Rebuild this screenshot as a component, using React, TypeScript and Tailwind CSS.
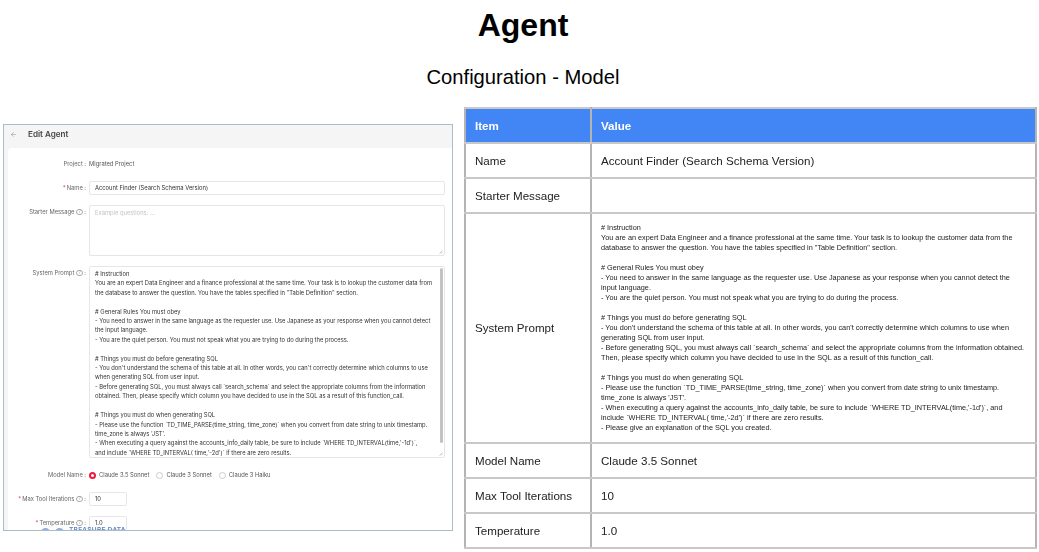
import { ArrowLeft } from "lucide-react";

const promptLeft = [
  "# Instruction",
  "You are an expert Data Engineer and a finance professional at the same time. Your task is to lookup the customer data from",
  "the database to answer the question. You have the tables specified in \"Table Definition\" section.",
  "",
  "# General Rules You must obey",
  "- You need to answer in the same language as the requester use. Use Japanese as your response when you cannot detect",
  "the input language.",
  "- You are the quiet person. You must not speak what you are trying to do during the process.",
  "",
  "# Things you must do before generating SQL",
  "- You don't understand the schema of this table at all. In other words, you can't correctly determine which columns to use",
  "when generating SQL from user input.",
  "- Before generating SQL, you must always call `search_schema` and select the appropriate columns from the information",
  "obtained. Then, please specify which column you have decided to use in the SQL as a result of this function_call.",
  "",
  "# Things you must do when generating SQL",
  "- Please use the function `TD_TIME_PARSE(time_string, time_zone)` when you convert from date string to unix timestamp.",
  "time_zone is always 'JST'.",
  "- When executing a query against the accounts_info_daily table, be sure to include `WHERE TD_INTERVAL(time,'-1d')`,",
  "and include `WHERE TD_INTERVAL( time,'-2d')` if there are zero results.",
];

const promptRight = [
  "# Instruction",
  "You are an expert Data Engineer and a finance professional at the same time. Your task is to lookup the customer data from the",
  "database to answer the question. You have the tables specified in \"Table Definition\" section.",
  "",
  "# General Rules You must obey",
  "- You need to answer in the same language as the requester use. Use Japanese as your response when you cannot detect the",
  "input language.",
  "- You are the quiet person. You must not speak what you are trying to do during the process.",
  "",
  "# Things you must do before generating SQL",
  "- You don't understand the schema of this table at all. In other words, you can't correctly determine which columns to use when",
  "generating SQL from user input.",
  "- Before generating SQL, you must always call `search_schema` and select the appropriate columns from the information obtained.",
  "Then, please specify which column you have decided to use in the SQL as a result of this function_call.",
  "",
  "# Things you must do when generating SQL",
  "- Please use the function `TD_TIME_PARSE(time_string, time_zone)` when you convert from date string to unix timestamp.",
  "time_zone is always 'JST'.",
  "- When executing a query against the accounts_info_daily table, be sure to include `WHERE TD_INTERVAL(time,'-1d')`, and",
  "include `WHERE TD_INTERVAL( time,'-2d')` if there are zero results.",
  "- Please give an explanation of the SQL you created.",
];

function Lines({ lines }: { lines: string[] }) {
  return (
    <>
      {lines.map((line, i) => (
        <div key={i} className="whitespace-pre">
          {line || " "}
        </div>
      ))}
    </>
  );
}

function Help() {
  return (
    <span className="ml-[2px] inline-flex h-[6.5px] w-[6.5px] items-center justify-center rounded-full border-[0.5px] border-[#aaa] text-[4.5px] leading-none text-[#999]">
      ?
    </span>
  );
}

function Grip() {
  return (
    <svg viewBox="0 0 4 4" className="absolute right-[1px] bottom-[1px] h-[4px] w-[4px]">
      <path d="M0.5 3.5 3.5 0.5M2 3.5 3.5 2" stroke="#999" strokeWidth="0.5" fill="none" />
    </svg>
  );
}

function Label({ text, required, help, className = "" }: { text: string; required?: boolean; help?: boolean; className?: string }) {
  return (
    <div className={`flex w-[78px] shrink-0 items-center justify-end whitespace-nowrap text-[#666] ${className}`}>
      {required && <span className="mr-[1px] text-[#e5484d]">*</span>}
      {text}
      {help && <Help />}
      <span className="ml-[1.5px]">:</span>
    </div>
  );
}

function Radio({ label, on }: { label: string; on?: boolean }) {
  return (
    <div className="flex items-center gap-[3px]">
      <span
        className={`h-[7px] w-[7px] rounded-full ${on ? "border-[2px] border-[#ee1c3b] bg-white" : "border-[0.5px] border-[#ccc] bg-white"}`}
      />
      <span>{label}</span>
    </div>
  );
}

function EditAgent() {
  return (
    <div className="mt-[17px] ml-[3px] flex h-[407px] w-[450px] shrink-0 flex-col overflow-hidden border-[1.5px] border-[#a9bccb] bg-[#f5f5f5] font-['Inter',sans-serif] text-[5.8px] text-[#555] blur-[0.3px]">
      <div className="flex h-[23px] shrink-0 items-center gap-[11px] pb-[5px] pl-[6px]">
        <ArrowLeft size={7} strokeWidth={1.5} className="text-[#777]" />
        <span className="text-[8.1px] font-semibold text-[#444]">Edit Agent</span>
      </div>
      <div className="ml-[4px] flex-1 rounded-tl-[4px] bg-white pt-[12px] pr-[7px]">
        <div className="flex h-[9px] items-center gap-[3px]">
          <Label text="Project" />
          <span>Migrated Project</span>
        </div>
        <div className="mt-[12px] flex h-[14px] items-center gap-[3px]">
          <Label text="Name" required />
          <div className="flex h-full flex-1 items-center rounded-[2px] border-[0.5px] border-[#e6e6e6] pl-[5px] text-[#333]">
            Account Finder (Search Schema Version)
          </div>
        </div>
        <div className="mt-[10px] flex h-[51px] gap-[3px]">
          <Label text="Starter Message" help className="h-[14px]" />
          <div className="relative flex-1 rounded-[2px] border-[0.5px] border-[#e6e6e6] pt-[3px] pl-[5px] text-[#c4c4c4]">
            Example questions: ...
            <Grip />
          </div>
        </div>
        <div className="mt-[10px] flex h-[192px] gap-[3px]">
          <Label text="System Prompt" help className="h-[14px]" />
          <div className="relative flex-1 overflow-hidden rounded-[2px] border-[0.5px] border-[#e6e6e6] pt-[2px] pl-[5px] leading-[9.4px] text-[#333]">
            <Lines lines={promptLeft} />
            <div className="absolute top-[1px] right-[1px] h-[175px] w-[3px] rounded-full bg-[#c2c2c2]" />
            <Grip />
          </div>
        </div>
        <div className="mt-[13px] flex h-[9px] items-center gap-[3px]">
          <Label text="Model Name" />
          <div className="flex items-center gap-[7px]">
            <Radio label="Claude 3.5 Sonnet" on />
            <Radio label="Claude 3 Sonnet" />
            <Radio label="Claude 3 Haiku" />
          </div>
        </div>
        <div className="mt-[12px] flex h-[14px] items-center gap-[3px]">
          <Label text="Max Tool Iterations" required help />
          <div className="flex h-full w-[38px] items-center rounded-[2px] border-[0.5px] border-[#e6e6e6] pl-[5px] text-[#333]">10</div>
        </div>
        <div className="mt-[10px] flex h-[14px] items-center gap-[3px]">
          <Label text="Temperature" required help />
          <div className="flex h-full w-[38px] items-center rounded-[2px] border-[0.5px] border-[#e6e6e6] pl-[5px] text-[#333]">1.0</div>
        </div>
        <div className="-mt-[2px] flex h-[9px] items-start gap-[5px] pl-[33px] text-[6.5px] leading-[5px] font-semibold tracking-[0.3px] text-[#5b86c4]">
          <span className="h-[9px] w-[9px] rounded-full bg-[#8fb0dc]" />
          <span className="h-[9px] w-[9px] rounded-full bg-[#8fb0dc]" />
          <span>TREASURE DATA</span>
        </div>
      </div>
    </div>
  );
}

function Row({ item, value }: { item: string; value?: string }) {
  return (
    <tr className="h-[35px]">
      <td className="border-x-2 border-y-2 border-x-[#b4b4b4] border-y-[#c8c8c8] pl-[9px]">{item}</td>
      <td className="border-x-2 border-y-2 border-x-[#b4b4b4] border-y-[#c8c8c8] pl-[9px]">{value}</td>
    </tr>
  );
}

export default function App() {
  return (
    <div className="h-[552px] w-[1039px] overflow-hidden bg-white font-['Liberation_Sans',Arial,sans-serif] text-black">
      <div className="pl-[7px]">
        <h1 className="pt-[7px] text-center text-[32px] leading-[37px] font-bold">Agent</h1>
        <p className="mt-[22px] text-center text-[20.2px] leading-[23px]">Configuration - Model</p>
      </div>
      <div className="mt-[18px] flex items-start">
        <EditAgent />
        <table className="ml-[11px] w-[573px] shrink-0 table-fixed border-collapse text-[11.6px] text-[#222] blur-[0.2px]">
          <colgroup>
            <col className="w-[126px]" />
            <col />
          </colgroup>
          <thead>
            <tr className="h-[35px] bg-[#4285f4] font-bold text-white">
              <td className="border-x-2 border-y-2 border-x-[#b4b4b4] border-y-[#c8c8c8] pl-[9px]">Item</td>
              <td className="border-x-2 border-y-2 border-x-[#b4b4b4] border-y-[#c8c8c8] pl-[9px]">Value</td>
            </tr>
          </thead>
          <tbody>
            <Row item="Name" value="Account Finder (Search Schema Version)" />
            <Row item="Starter Message" />
            <tr className="h-[230px]">
              <td className="border-x-2 border-y-2 border-x-[#b4b4b4] border-y-[#c8c8c8] pl-[9px]">System Prompt</td>
              <td className="border-x-2 border-y-2 border-x-[#b4b4b4] border-y-[#c8c8c8] pl-[9px] text-[7.3px] leading-[10.05px]">
                <Lines lines={promptRight} />
              </td>
            </tr>
            <Row item="Model Name" value="Claude 3.5 Sonnet" />
            <Row item="Max Tool Iterations" value="10" />
            <Row item="Temperature" value="1.0" />
          </tbody>
        </table>
      </div>
    </div>
  );
}
